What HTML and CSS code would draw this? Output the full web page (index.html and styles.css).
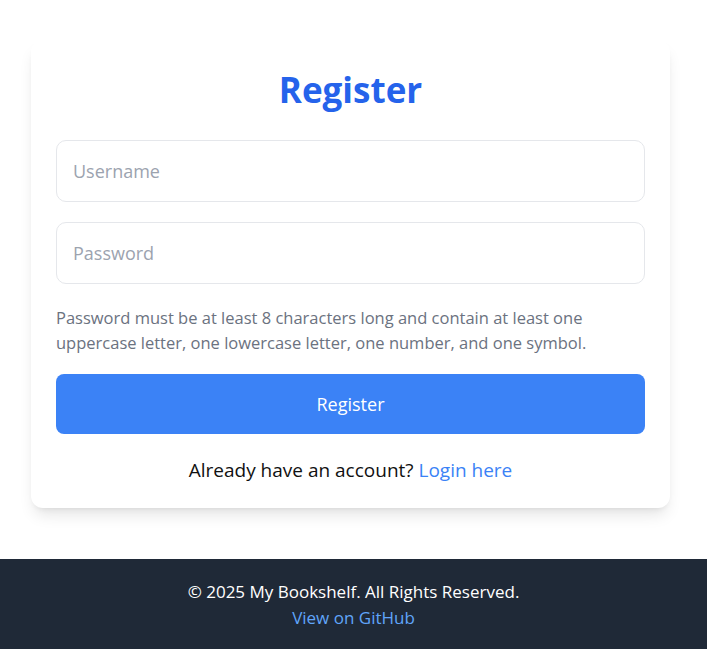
FILE: index.html
```html
<!DOCTYPE html>
<html lang="en">
<head>
<meta charset="utf-8">
<title>Register - My Bookshelf</title>
<link rel="stylesheet" href="styles.css">
</head>
<body>
<main class="main">
  <div class="card">
    <h1 class="title">Register</h1>
    <form class="form">
      <input class="field" type="text" placeholder="Username">
      <input class="field" type="password" placeholder="Password">
      <p class="hint">Password must be at least 8 characters long and contain at least one uppercase letter, one lowercase letter, one number, and one symbol.</p>
      <button class="btn" type="button">Register</button>
    </form>
    <p class="switch">Already have an account? <a href="#" class="link">Login here</a></p>
  </div>
</main>
<footer class="footer">
  <p class="copy">© 2025 My Bookshelf. All Rights Reserved.</p>
  <a href="#" class="link gh">View on GitHub</a>
</footer>
</body>
</html>
```
FILE: styles.css
```css
* { box-sizing: border-box; }
html, body { margin: 0; padding: 0; background: #fff; }
body {
  font-family: "Open Sans", "Noto Sans", sans-serif;
  color: #111;
}
.main {
  padding: 40px 37px 51px 31px;
}
.card {
  width: 639px;
  background: #fff;
  border-radius: 12px;
  box-shadow: 0 10px 15px -3px rgba(0,0,0,0.1), 0 4px 6px -4px rgba(0,0,0,0.1);
  padding: 32px 25px 26px;
}
.title {
  margin: 0 0 32px;
  text-align: center;
  color: #2563eb;
  font-size: 35px;
  line-height: 36px;
  font-weight: 700;
}
.form {
  display: flex;
  flex-direction: column;
}
.field {
  height: 62px;
  border: 1px solid #e5e7eb;
  border-radius: 10px;
  padding: 0 16px;
  font-family: inherit;
  font-size: 18px;
  color: #111;
  outline: none;
  margin-bottom: 20px;
}
.field::placeholder { color: #9ca3af; }
.field + .field { margin-bottom: 21px; }
.hint {
  margin: 0 0 19px;
  color: #6b7280;
  font-size: 16.5px;
  line-height: 25px;
}
.btn {
  height: 60px;
  border: none;
  border-radius: 8px;
  background: #3b82f6;
  color: #fff;
  font-family: inherit;
  font-size: 18px;
}
.switch {
  margin: 24px 0 0;
  text-align: center;
  font-size: 19px;
  line-height: 24px;
  color: #111;
}
.link { color: #3b82f6; text-decoration: none; }
.footer {
  background: #1f2937;
  color: #fff;
  text-align: center;
  padding: 20px 0 18px;
  font-size: 17px;
  line-height: 26px;
}
.copy { margin: 0; }
.gh { display: block; color: #60a5fa; }
```
